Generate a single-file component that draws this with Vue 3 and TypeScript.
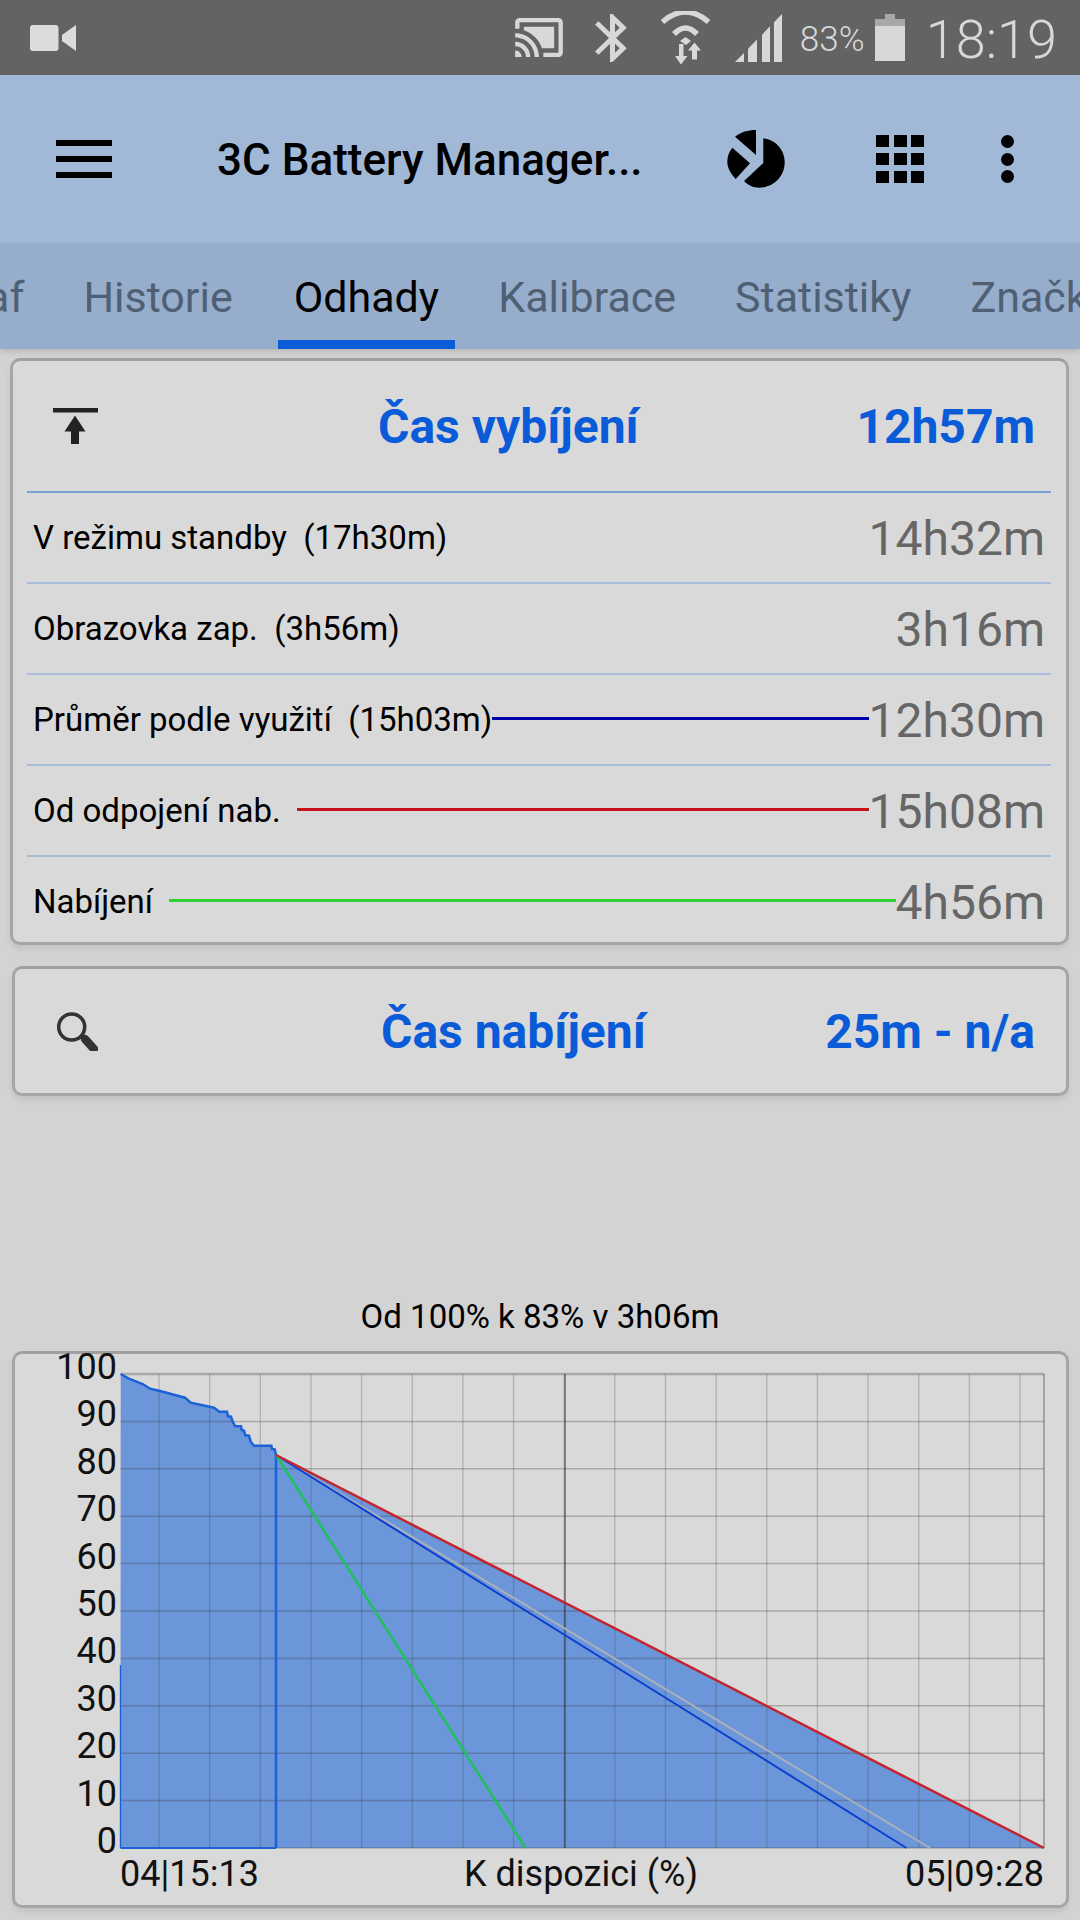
<script setup lang="ts">
const tabs = ['Graf', 'Historie', 'Odhady', 'Kalibrace', 'Statistiky', 'Značky']
const activeTab = 'Odhady'

const rows = [
  { label: 'V režimu standby  (17h30m)', value: '14h32m', line: '', tight: false },
  { label: 'Obrazovka zap.  (3h56m)', value: '3h16m', line: '', tight: false },
  { label: 'Průměr podle využití  (15h03m)', value: '12h30m', line: '#0000a8', tight: true },
  { label: 'Od odpojení nab.', value: '15h08m', line: '#c8101c', tight: false },
  { label: 'Nabíjení', value: '4h56m', line: '#2fd135', tight: false }
]

// chart coordinates
const left = 120.5
const right = 1044
const top = 1374
const bottom = 1848
const stepY = (bottom - top) / 10
const hLines = Array.from({ length: 11 }, (_, i) => top + i * stepY)
const vLines = Array.from({ length: 18 }, (_, i) => 159 + i * 50.65)
const yLabels = [100, 90, 80, 70, 60, 50, 40, 30, 20, 10, 0]

const curve: [number, number][] = [
  [62, 42], [85, 55], [128, 72], [150, 86], [180, 93], [255, 113], [272, 128], [342, 143],
  [358, 155], [381, 155], [384, 169], [393, 170], [398, 185], [406, 199], [423, 199], [425, 210],
  [432, 212], [436, 226], [447, 227], [452, 245], [462, 257], [514, 257], [516, 267], [524, 268], [528, 285]
]
const curvePts = curve.map(([x, y]) => `${(100 + x / 3).toFixed(1)},${(1360 + y / 3).toFixed(1)}`).join(' ')
const fillPts = `${left},${bottom} ${curvePts} ${right},${bottom}`
</script>

<template>
  <div class="screen">
    <div class="status">
      <svg class="st-cam" width="46" height="26" viewBox="0 0 46 26">
        <rect x="0" y="0" width="28.5" height="26" rx="3" fill="#dcdcdc" />
        <path d="M32 10 L46 0 V26 L32 16 Z" fill="#dcdcdc" />
      </svg>
      <span class="st-spacer"></span>
      <svg class="st-cast" width="48" height="39" viewBox="1 3 22 18">
        <path fill="#d8d8d8" d="M1 18v3h3c0-1.66-1.34-3-3-3zm0-4v2c2.76 0 5 2.24 5 5h2c0-3.87-3.13-7-7-7zm18-7H5v1.63c3.96 1.28 7.09 4.41 8.37 8.37H19V7zM1 10v2c4.97 0 9 4.03 9 9h2c0-6.08-4.93-11-11-11zm20-7H3c-1.1 0-2 .9-2 2v3h2V5h18v14h-7v2h7c1.1 0 2-.9 2-2V5c0-1.1-.9-2-2-2z" />
      </svg>
      <svg class="st-bt" width="33" height="48" viewBox="5 2 13.2 20" preserveAspectRatio="none">
        <path fill="#d8d8d8" d="M17.71 7.71L12 2h-1v7.59L6.41 5 5 6.41 10.59 12 5 17.59 6.41 19 11 14.41V22h1l5.71-5.71-4.3-4.29 4.3-4.29zM13 5.83l1.88 1.88L13 9.59V5.83zm1.88 10.46L13 18.17v-3.76l1.88 1.88z" />
      </svg>
      <svg class="st-wifi" width="51" height="54" viewBox="660 10 51 54">
        <path d="M662.5 21 Q685.5 1 708.5 21" fill="none" stroke="#d8d8d8" stroke-width="5.5" />
        <path d="M674 33 Q685.5 21 697 33" fill="none" stroke="#d8d8d8" stroke-width="5.5" />
        <path d="M680 40 L685.5 36 L691 40 L686 44 Z" fill="#d8d8d8" />
        <path d="M679 43 H683.5 V55 H687.5 L681 63.5 L675 55 H679 Z" fill="#d8d8d8" />
        <path d="M694.5 41.5 L701 49.5 H697 V58.5 H692 V49.5 H688 Z" fill="#d8d8d8" />
      </svg>
      <svg class="st-signal" width="48" height="48" viewBox="734 13 48 48">
        <polygon points="735,61 744,52 744,61" fill="#d8d8d8" />
        <polygon points="748,61 748,47.7 757,38.5 757,61" fill="#d8d8d8" />
        <polygon points="762,61 762,33.7 770,25.3 770,61" fill="#d8d8d8" />
        <polygon points="774,61 774,21.2 782,13 782,61" fill="#d8d8d8" />
      </svg>
      <span class="st-pct">83%</span>
      <svg class="st-batt" width="30" height="47" viewBox="0 0 30 47">
        <rect x="10" y="0" width="10" height="6" fill="#a8a8a8" />
        <rect x="0" y="5" width="30" height="7" fill="#a8a8a8" />
        <rect x="0" y="12" width="30" height="35" fill="#d8d8d8" />
      </svg>
      <span class="st-time">18:19</span>
    </div>

    <div class="appbar">
      <div class="burger"><i></i><i></i><i></i></div>
      <div class="app-title">3C Battery Manager...</div>
      <svg class="pie" width="60" height="60" viewBox="26 9 60 60">
        <path d="M63.3 18.3 C76 20 84.7 30 84.7 42 C84.7 57 73 67.7 59 67.7 C54 67.7 49 66 44 61 L63.3 43 Z" />
        <path d="M35 16.7 C41 12 48 10 56 10 L56 35 Z" />
        <path d="M32.3 27.7 L50 43.3 L35.7 59 C30 53 27.3 47 27.3 42 C27.3 36 29 32 32.3 27.7 Z" />
      </svg>
      <div class="apps"><i v-for="n in 9" :key="n"></i></div>
      <div class="dots"><i></i><i></i><i></i></div>
    </div>

    <div class="tabbar">
      <div v-for="t in tabs" :key="t" class="tab" :class="{ active: t === activeTab }">{{ t }}</div>
    </div>

    <div class="card card-main">
      <div class="card-head">
        <svg class="head-icon" width="45" height="36" viewBox="53 406 45 36">
          <rect x="53" y="406" width="45" height="4.5" fill="#222" />
          <path d="M75 413.5 L85.5 429.5 H79 V442 H71 V429.5 H64.5 Z" fill="#222" />
        </svg>
        <span class="head-title title-discharge">Čas vybíjení</span>
        <span class="head-value">12h57m</span>
      </div>
      <div v-for="(r, i) in rows" :key="r.label" class="row" :class="{ first: i === 0 }">
        <span class="row-label">{{ r.label }}</span>
        <span class="row-fill">
          <i v-if="r.line" class="row-line" :class="{ tight: r.tight }" :style="{ background: r.line }"></i>
        </span>
        <span class="row-value">{{ r.value }}</span>
      </div>
    </div>

    <div class="card card-charge">
      <div class="card-head head-charge">
        <svg class="head-icon" width="45" height="40" viewBox="53 1009 45 40">
          <circle cx="71.7" cy="1025" r="13" fill="none" stroke="#333" stroke-width="3.5" />
          <path d="M81 1034 L85 1037" stroke="#333" stroke-width="4" />
          <path d="M85 1037 L94 1047" stroke="#333" stroke-width="8.5" stroke-linecap="round" />
        </svg>
        <span class="head-title title-charge">Čas nabíjení</span>
        <span class="head-value">25m - n/a</span>
      </div>
    </div>

    <div class="chart-title">Od 100% k 83% v 3h06m</div>

    <div class="card card-chart">
      <svg class="chart" width="1049" height="551" viewBox="15 1354 1049 551">
        <polygon :points="fillPts" fill="#6c96da" />
        <line v-for="x in vLines" :key="x" :x1="x" :x2="x" :y1="top" :y2="bottom" stroke="#3c3c3c" stroke-opacity="0.26" stroke-width="1.3" />
        <line :x1="right" :x2="right" :y1="top" :y2="bottom" stroke="#8f8f8f" stroke-width="1.5" />
        <line v-for="(y, i) in hLines" :key="y" :x1="left" :x2="right" :y1="y" :y2="y" stroke="#3c3c3c" stroke-opacity="0.3" :stroke-width="i === 0 ? 2.5 : 1.5" />
        <line x1="565" x2="565" :y1="top" :y2="bottom" stroke="#333" stroke-width="1" />
        <polyline :points="curvePts" fill="none" stroke="#1a62d6" stroke-width="2.5" />
        <line x1="276" x2="276" y1="1455" :y2="bottom" stroke="#1a62d6" stroke-width="2.5" />
        <line :x1="left" :x2="276" :y1="bottom" :y2="bottom" stroke="#1a62d6" stroke-width="1.8" />
        <line :x1="left" :x2="left" y1="1665" :y2="bottom" stroke="#1a62d6" stroke-width="1.4" />
        <line x1="276" y1="1455" x2="930" :y2="bottom" stroke="#a9b0bb" stroke-width="2" />
        <line x1="276" y1="1455" x2="906.5" :y2="bottom" stroke="#0b3fd0" stroke-width="2" />
        <line x1="276" y1="1455" x2="525.5" :y2="bottom" stroke="#1fc25a" stroke-width="2.5" />
        <line x1="276" y1="1455" :x2="right" :y2="bottom" stroke="#c4242e" stroke-width="2.5" />
        <text v-for="(l, i) in yLabels" :key="l" class="axis" x="117" :y="hLines[i] + 5" text-anchor="end">{{ l }}</text>
        <text class="axis" x="120" y="1886">04|15:13</text>
        <text class="axis" x="581" y="1886" text-anchor="middle">K dispozici (%)</text>
        <text class="axis" x="1044" y="1886" text-anchor="end">05|09:28</text>
      </svg>
    </div>
  </div>
</template>

<style>
html, body {
  margin: 0;
  background: #d3d3d3;
}
</style>

<style scoped>
.screen {
  width: 1080px;
  height: 1920px;
  overflow: hidden;
  background: #d3d3d3;
  font-family: Roboto, "Liberation Sans", sans-serif;
  color: #000;
}

.status {
  height: 75px;
  background: #636363;
  display: flex;
  align-items: center;
  padding: 0 23px 0 30px;
  box-sizing: border-box;
}
.st-spacer { flex: 1; }
.st-bt { margin-left: 32px; }
.st-wifi { margin-left: 32px; }
.st-signal { margin-left: 23px; }
.st-pct {
  margin-left: 18px;
  width: 66px;
  font-size: 35px;
  font-weight: 300;
  color: #d8d8d8;
  margin-top: 3px;
  white-space: nowrap;
}
.st-batt { margin-left: 9px; }
.st-time {
  margin-left: 21px;
  font-size: 54px;
  font-weight: 300;
  color: #d8d8d8;
  margin-top: 3px;
}

.appbar {
  height: 168px;
  background: #a2b8d7;
  display: flex;
  align-items: center;
  padding-left: 56px;
  box-sizing: border-box;
}
.burger {
  width: 56px;
  height: 38px;
  display: flex;
  flex-direction: column;
  justify-content: space-between;
}
.burger i {
  display: block;
  height: 6px;
  background: #000;
}
.app-title {
  margin-left: 105px;
  margin-top: 2px;
  width: 423px;
  font-size: 44px;
  font-weight: 500;
  white-space: nowrap;
}
.pie {
  margin-left: 86px;
}
.apps {
  margin-left: 90px;
  width: 48px;
  height: 48px;
  display: grid;
  grid-template-columns: repeat(3, 13px);
  grid-template-rows: repeat(3, 12px);
  justify-content: space-between;
  align-content: space-between;
}
.apps i {
  display: block;
  background: #000;
}
.dots {
  margin-left: 77px;
  height: 48px;
  display: flex;
  flex-direction: column;
  justify-content: space-between;
}
.dots i {
  display: block;
  width: 13px;
  height: 13px;
  border-radius: 50%;
  background: #000;
}

.tabbar {
  height: 106px;
  background: #97adcc;
  display: flex;
  gap: 27px;
  overflow: hidden;
  margin-bottom: 9px;
  box-shadow: 0 3px 6px rgba(0, 0, 0, 0.12);
}
.tab {
  flex: none;
  box-sizing: border-box;
  height: 106px;
  padding: 0 16px;
  font-size: 43px;
  line-height: 108px;
  color: #4f6075;
  white-space: nowrap;
}
.tab:first-child {
  margin-left: -73px;
}
.tab.active {
  margin-left: 2px;
  color: #000;
  border-bottom: 9px solid #0a5bd8;
}

.card {
  background: #d9d9d9;
  border: 3px solid #a6a6a6;
  border-top-color: #a0a0a0;
  border-radius: 10px;
  box-sizing: border-box;
  box-shadow: 0 4px 6px rgba(0, 0, 0, 0.08);
}
.card-main {
  margin: 0 11px 0 10px;
  height: 587px;
  padding: 0 15px 0 14px;
}
.card-head {
  height: 130px;
  display: flex;
  align-items: center;
  margin-right: 16px;
}
.head-icon {
  flex: none;
  margin-left: 26px;
}
.head-title {
  color: #0a5bd8;
  font-size: 48px;
  font-weight: 700;
}
.title-discharge {
  margin-left: 280px;
}
.title-charge {
  margin-left: 283px;
}
.head-value {
  margin-left: auto;
  color: #0a5bd8;
  font-size: 48px;
  font-weight: 700;
}
.row {
  height: 91px;
  border-top: 2px solid #a8bcdc;
  box-sizing: border-box;
  display: flex;
  align-items: center;
}
.row.first {
  border-top-color: #7a9fd2;
}
.row-label {
  margin-left: 6px;
  font-size: 33px;
  white-space: pre;
}
.row-fill {
  flex: 1;
  display: flex;
  align-items: center;
}
.row-line {
  display: block;
  flex: 1;
  height: 2.5px;
  margin-left: 16px;
  margin-top: -2px;
}
.row-line.tight {
  margin-left: 0;
}
.row-value {
  margin-right: 6px;
  margin-top: 2px;
  font-size: 48px;
  color: #666;
}

.card-charge {
  margin: 21px 11px 0 12px;
  height: 130px;
  padding: 0 15px 0 12px;
}
.head-charge {
  height: 124px;
}
.chart-title {
  margin-top: 201px;
  height: 40px;
  line-height: 40px;
  text-align: center;
  font-size: 33px;
}

.card-chart {
  margin: 14px 11px 0 12px;
  height: 557px;
}
.chart {
  display: block;
  overflow: visible;
}
.axis {
  font-family: Roboto, "Liberation Sans", sans-serif;
  font-size: 36px;
  fill: #111;
}
</style>
